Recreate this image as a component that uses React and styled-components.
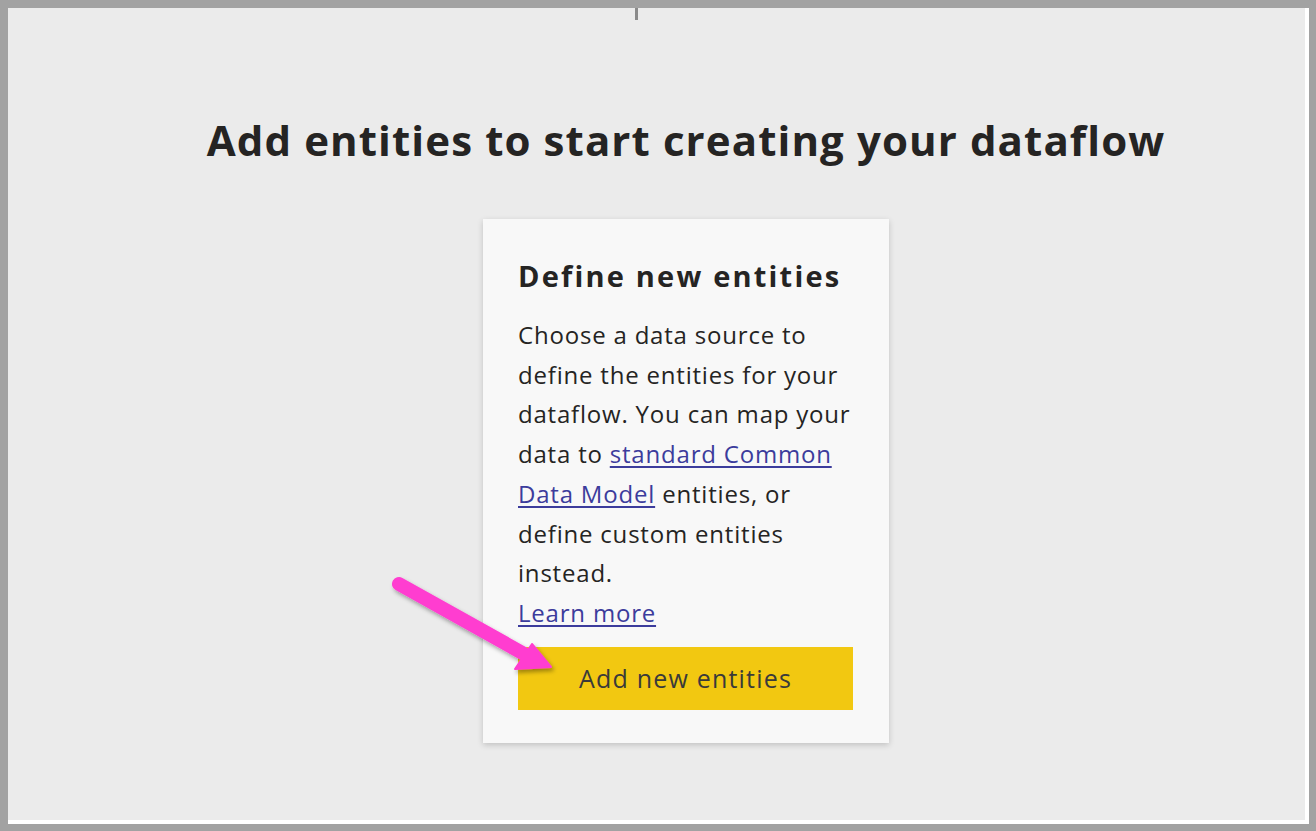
import styled, { createGlobalStyle } from "styled-components";

const GlobalStyle = createGlobalStyle`
  html, body {
    margin: 0;
    padding: 0;
    background: #a2a2a2;
  }
  body {
    font-family: "Open Sans", "Noto Sans", "Liberation Sans", sans-serif;
  }
`;

const Frame = styled.div`
  width: 1316px;
  height: 831px;
  box-sizing: border-box;
  padding: 8px 7px 7px 8px;
  background: #a2a2a2;
`;

const Canvas = styled.div`
  position: relative;
  height: 100%;
  box-sizing: border-box;
  background: #ebebeb;
  border-right: 4px solid #ffffff;
  border-bottom: 4px solid #ffffff;
  padding-left: 59px;
  display: flex;
  flex-direction: column;
  align-items: center;
`;

const TopTick = styled.div`
  position: absolute;
  top: 0;
  left: 627px;
  width: 3px;
  height: 12px;
  background: #8a8a8a;
  filter: blur(0.5px);
`;

const Heading = styled.h1`
  margin: 105px 0 0;
  font-size: 42px;
  line-height: 54px;
  letter-spacing: 1.1px;
  font-weight: 700;
  color: #252423;
  white-space: nowrap;
`;

const Card = styled.div`
  margin-top: 52px;
  width: 406px;
  height: 524px;
  box-sizing: border-box;
  padding: 37px 35px 0;
  background: #f8f8f8;
  box-shadow: 0 2px 6px rgba(0, 0, 0, 0.18);
  display: flex;
  flex-direction: column;
`;

const CardTitle = styled.h2`
  margin: 0 0 19px;
  font-size: 29px;
  line-height: 40px;
  letter-spacing: 2.2px;
  font-weight: 700;
  color: #252423;
  white-space: nowrap;
`;

const Body = styled.p`
  margin: 0;
  font-size: 24px;
  line-height: 39.7px;
  letter-spacing: 0.8px;
  color: #252423;
  white-space: nowrap;
`;

const Link = styled.a`
  color: #3c3c9c;
  text-decoration: underline;
  text-underline-offset: 3px;
  cursor: pointer;
`;

const Button = styled.button`
  margin-top: 14px;
  width: 335px;
  height: 63px;
  border: none;
  background: #f2c811;
  color: #3a3a3a;
  font-family: inherit;
  font-size: 25px;
  letter-spacing: 1.2px;
  cursor: pointer;
`;

const ArrowLayer = styled.svg`
  position: absolute;
  left: 0;
  top: 0;
  width: 100%;
  height: 100%;
  pointer-events: none;
  overflow: visible;
`;

function PinkArrow() {
  return (
    <ArrowLayer>
      <defs>
        <filter id="arrowShadow" x="-20%" y="-20%" width="140%" height="140%">
          <feDropShadow dx="2" dy="3" stdDeviation="2" floodColor="#000" floodOpacity="0.35" />
        </filter>
      </defs>
      <g filter="url(#arrowShadow)" transform="translate(-8,-8)">
        <line x1="399" y1="584" x2="526" y2="655" stroke="#ff3dd0" strokeWidth="14" strokeLinecap="round" />
        <polygon points="532,644 515,669 551,667" fill="#ff3dd0" stroke="#ff3dd0" strokeWidth="2" strokeLinejoin="round" />
      </g>
    </ArrowLayer>
  );
}

export default function App() {
  return (
    <>
      <GlobalStyle />
      <Frame>
        <Canvas>
          <TopTick />
          <Heading>Add entities to start creating your dataflow</Heading>
          <Card>
            <CardTitle>Define new entities</CardTitle>
            <Body>
              Choose a data source to
              <br />
              define the entities for your
              <br />
              dataflow. You can map your
              <br />
              data to <Link>standard Common</Link>
              <br />
              <Link>Data Model</Link> entities, or
              <br />
              define custom entities
              <br />
              instead.
              <br />
              <Link>Learn more</Link>
            </Body>
            <Button>Add new entities</Button>
          </Card>
          <PinkArrow />
        </Canvas>
      </Frame>
    </>
  );
}
